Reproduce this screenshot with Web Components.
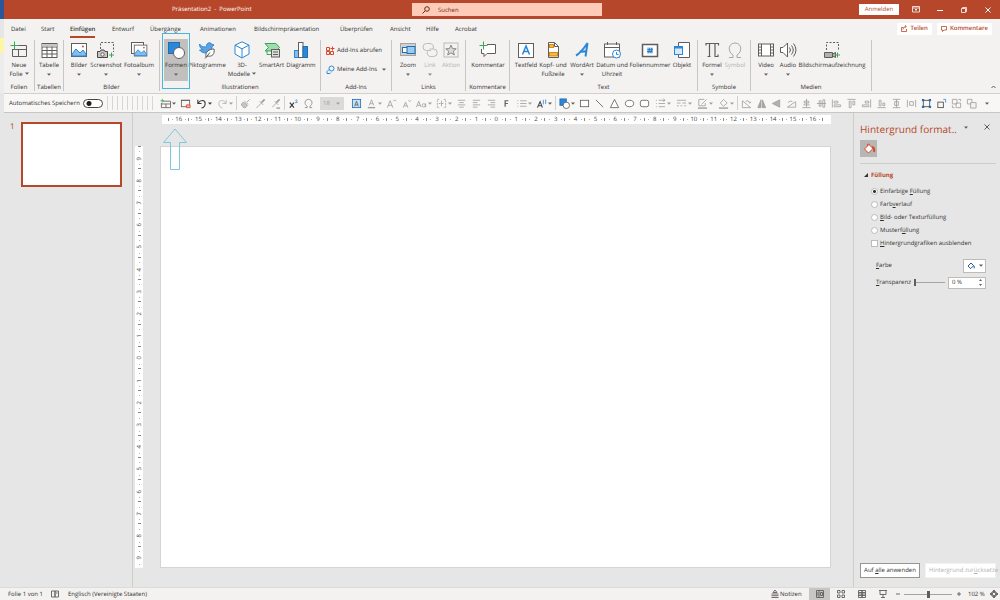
<!DOCTYPE html>
<html lang="de">
<head>
<meta charset="utf-8">
<title>Präsentation2 - PowerPoint</title>
<style>
html,body{height:100%;margin:0}
body{font-family:"Open Sans","Noto Sans",sans-serif;font-size:6px;line-height:9px;color:#323130;background:#e6e6e6;text-rendering:geometricPrecision}
</style>
</head>
<body>
<ppt-app></ppt-app>
<script>
const BASE = `*{box-sizing:border-box}button,input,select{font:inherit;color:inherit;margin:0;padding:0;border:0;background:none;text-rendering:inherit}button{display:flex;align-items:center;justify-content:center;white-space:nowrap}svg{display:block;flex:none;overflow:visible}a{color:inherit;text-decoration:none}`;
const G = '#605e5c', B = '#2b88d8', L = '#a6a4a2', GR = '#3aa757', OR = '#d8492b';
const svg = (body, w = 18, h = 18, vb = '0 0 18 18') => `<svg width="${w}" height="${h}" viewBox="${vb}" fill="none" stroke="${G}" stroke-width="1" aria-hidden="true">${body}</svg>`;
const chev = (c = G) => `<svg width="4" height="3" viewBox="0 0 4 3" aria-hidden="true"><path d="M0 .5h4L2 2.7z" fill="${c}"/></svg>`;
const pic = `<rect x="1.5" y="2.5" width="15" height="13" fill="#fff"/><path d="M2 13l4-5 4 4 3-3 3 4v2H2z" fill="#83bdec" stroke="${B}"/><circle cx="13" cy="5.5" r="1" fill="${OR}" stroke="none"/>`;
const BIG = {
 slide:`<path d="M8 4.500H16.500V15.500H2.500V8M2.500 8.500H16.500M8.500 8.500V15.500" fill="none"/><path d="M4.500 .5V8.500M.5 4.500H8.500" stroke="${GR}"/>`,
 table:`<rect x="2" y="2.500" width="15" height="14" fill="#fff"/><path d="M2 6h15M2 9.500h15M2 13h15M7 2.500v14M12 2.500v14"/><path d="M2 3h15v2.500H2z" fill="#c8c6c4" stroke="none"/>`,
 picture:pic,
 screenshot:`<path d="M3.500 8V1.500H16.500V11" stroke-dasharray="2 1.500"/><path d="M.5 10.500h2.500l1-1.500h3l1 1.500h2.500v6H.5z" fill="#c8c6c4" stroke="#484644"/><circle cx="5.500" cy="13.500" r="1.700" fill="#fff"/><path d="M14.500 11.500v5M12 14h5" stroke="${GR}"/>`,
 album:`<rect x="1.500" y="1.500" width="12" height="11" fill="#fff"/><g transform="translate(3 2) scale(.84)">${pic}</g>`,
 shapes:`<rect x="1.500" y="1.500" width="11" height="11" fill="${B}" stroke="#1f6fb5"/><circle cx="12" cy="12" r="5.500" fill="#fff"/>`,
 bird:`<path d="M1.500 3c2 3 5 3.500 7 2.500C8 2 12 .5 13.500 3l2.500 1-2 1.500c0 4-3 6.500-6 6.500-2.500 0-5-1-6.500-3 1 0 2 0 3-.5-2-1-3-3-3-5.500z" fill="#5aa3e0" stroke="${B}"/><path d="M8 16c-1-5 3-8 8-8 1 5-2 8-6 7zM7 17.500l5-6" fill="#fff"/>`,
 cube:`<path d="M9 .8l7 3.400v8.800l-7 4-7-4V4.200z" fill="#fff" stroke="${B}"/><path d="M2 4.200l7 3.600 7-3.600M9 7.800V17" stroke="${B}"/>`,
 smart:`<path d="M2 2.500h11l3.500 4-3.500 3.500H2l3.500-3.500z" fill="#9fdcae" stroke="${GR}"/><path d="M4 13.500h7M4 13.500v-4" stroke="${GR}"/><rect x="8.500" y="8.500" width="8" height="7.500" fill="#e1dfdd"/><path d="M10 11h5M10 13.500h5"/>`,
 chart:`<rect x="2.500" y="9.500" width="4" height="7" fill="#83bdec" stroke="${B}"/><rect x="6.500" y="1.500" width="4.500" height="15" fill="#fff"/><rect x="11" y="5.500" width="4.500" height="11" fill="${B}" stroke="#1f6fb5"/>`,
 zoom:`<rect x="1.500" y="2.500" width="15" height="12" fill="#d2d0ce" stroke="${L}"/><rect x="3.500" y="6.500" width="6" height="5" fill="#fff" stroke="#1f6fb5"/><rect x="8" y="5.500" width="8" height="7" fill="#9ccbf0" stroke="#1f6fb5"/>`,
 link:`<path d="M10 9.500H5.500a3.500 3.500 0 010-7H9a3.500 3.500 0 013 5.200M8.500 8h4a3.500 3.500 0 010 7.500h-3a3.500 3.500 0 01-3-5" stroke="${L}"/>`,
 action:`<rect x="2" y="2" width="14" height="14" stroke="${L}"/><path d="M9 4l1.500 3.600 3.700.2-2.900 2.400 1 3.800L9 11.900 5.700 14l1-3.800-2.900-2.400 3.700-.2z" fill="#d2d0ce" stroke="${G}"/>`,
 comment:`<path d="M8 3.500h8.500v9H8l-3 3v-3H2.500V8" fill="#fff"/><path d="M4.500 .5v8M.5 4.500h8" stroke="${GR}"/>`,
 textbox:`<rect x="1.500" y="2.500" width="15" height="14" fill="#fff"/><path d="M5.500 13.500L9 5l3.500 8.500M6.800 10.500h4.400" stroke="${B}" stroke-width="1.500"/>`,
 header:`<path d="M4.500 1.500h6l4 4v11h-10z" fill="#fff"/><path d="M10.500 1.500v4h4"/><rect x="5.500" y="3.500" width="4" height="3" fill="#f6b84b" stroke="#d58a10"/><rect x="5.500" y="11.500" width="8" height="3.500" fill="#f6b84b" stroke="#d58a10"/>`,
 wordart:`<path d="M3 14.500C8 12 11 7 14.500 2L12.500 15.500M6.500 10.500c3 .5 5 0 7-.5" stroke="${B}" stroke-width="2"/>`,
 date:`<rect x="1.500" y="3" width="15" height="13" fill="#fff"/><path d="M1.500 6.500h15M4.500 1v3M13.500 1v3"/><circle cx="13.500" cy="13" r="4" fill="#fff" stroke="${B}"/><path d="M13.500 11v2.500h2" stroke="${B}"/>`,
 number:`<rect x="1.500" y="3.500" width="15" height="12" fill="#fff" stroke-width="1.500"/><rect x="6" y="6.500" width="6" height="6" fill="#9ccbf0" stroke="none"/><path d="M8.500 7l-.8 5M10.700 7l-.8 5M6.500 8.700h5.500M6 10.500h5.500" stroke="#1f6fb5" stroke-width=".8"/>`,
 object:`<path d="M5.500 6V1.500h11v15h-11V13" fill="#fff"/><rect x="1.500" y="5.500" width="8" height="8" fill="#d6eafa" stroke="${B}"/><path d="M1.500 6.500h8" stroke="${B}" stroke-width="2"/>`,
 pi:`<path d="M3 4.500V2.500h12.500v2M6.500 2.500v13M12 2.500v13h3v-2M4.500 15.500h3" stroke-width="1.200"/>`,
 omega:`<path d="M3 16.500h4V14C1.500 11 2 2 9 2s7.500 9 2 12v2.500h4" stroke="#8a8886"/>`,
 video:`<rect x="1.500" y="3" width="15" height="12" fill="#fff"/><path d="M4.500 3v12M13.500 3v12M1.500 6h3M1.500 9h3M1.500 12h3M13.500 6h3M13.500 9h3M13.500 12h3"/>`,
 audio:`<path d="M1.500 6.500H4L8.500 2v14L4 11.500H1.500z" fill="#fff"/><path d="M10.500 6.500q2 2.500 0 5M12.500 4.500q3.500 4.500 0 9M14.500 2.500q5 6.500 0 13"/>`,
 record:`<path d="M3.500 9V1.500H15.500V10" stroke-dasharray="2 1.500"/><path d="M1.500 11.500h8v5h-8zM9.500 13l3-1.500v5l-3-1.500" fill="#b3b0ad"/><path d="M14.500 11.500v5M12 14h5" stroke="${GR}"/>`
};
const S = {
 newslide:'<path d="M3.500 3.500h8v7h-10v-5M1.500 6.500h10M6.500 6.500v4"/><path d="M2.500 1v4M.5 3h4" stroke="#3aa757"/>',
 present:'<rect x="1.500" y="2.500" width="9" height="7"/><path d="M1 2.500h10"/><path d="M7 7.500h4v3H7z" fill="#f4b3b3" stroke="#d8492b"/>',
 undo:'<path d="M2 2v4h4M2.500 5.500C5 1.500 10 2 10 6c0 3-2 4.500-4 5" stroke-width="1.200"/>',
 redo:'<path d="M10 2v4H6M9.500 5.500C7 1.500 2 2 2 6c0 3 2 4.500 4 5" stroke="#b3b0ad"/>',
 brush:'<path d="M10.500 1.500L7.500 4.500"/><path d="M4 4.500L8 8c-1 2-2 3-4 2.500C3 9.500 2 8.500 1.500 6.500zM5 3.500l4 3.500" fill="#c8c6c4"/>',
 dropper:'<path d="M10.500 1.500L7 5" stroke-width="2"/><path d="M5 3.500l4 4M7 5.500L2.500 10l-1 1"/>',
 dropper2:'<path d="M10.500 1.500L7 5" stroke-width="2"/><path d="M5 3.500l4 4M7 5.500L2.500 10"/><path d="M7 11h4" stroke-width="1.500"/>',
 sup:'<path d="M2 5l4.500 5.500M6.500 5L2 10.500" stroke="#3b3a39" stroke-width="1.300"/><path d="M8 2.500q1.500-1 2 0T8 5h2.500" stroke="#2b88d8" stroke-width=".8"/>',
 omega:'<path d="M2 10.500h2.500V9C1 7 1.500 1.500 6 1.500S11 7 7.500 9v1.500H10" stroke="#8a8886"/>',
 textbox:'<rect x="1.500" y="1.500" width="9" height="9" fill="#c7e0f4" stroke="#1f6fb5"/><path d="M4 9l2-5.500L8 9M4.700 7.500h2.600"/>',
 fontcolor:'<path d="M3.500 8L6 2l2.500 6M4.500 6.200h3"/><path d="M2 10.500h8" stroke-width="1.500"/>',
 grow:'<path d="M1.500 10.500L4.500 3l3 7.500M2.500 8h4M8 3.500L9.500 2 11 3.500"/>',
 shrink:'<path d="M2.500 10.500L5 4.500l2.500 6M3.500 8.500h3M8 2.500L9.500 4 11 2.500"/>',
 case:'<path d="M.5 10L3 3.500 5.500 10M1.500 8h3"/><circle cx="8.500" cy="8" r="1.800"/><path d="M10.500 6v4"/>',
 spacing:'<path d="M3.500 1.500h-2v9h2M8.500 1.500h2v9h-2M3 6h6" stroke-dasharray="2 1"/><path d="M6 3v6"/>',
 center:'<path d="M2 2.500h8M3.500 5h5M2 7.500h8M3.500 10h5"/>',
 left:'<path d="M2 2.500h8M2 5h5M2 7.500h8M2 10h5"/>',
 right:'<path d="M2 2.500h8M5 5h5M2 7.500h8M5 10h5"/>',
 bold:'<path d="M4.500 9.500V3h3.500M4.500 6h3" stroke="#605e5c" stroke-width="1.300"/>',
 list:'<path d="M4.500 3h7M4.500 6h7M4.500 9h7M1.500 3h1M1.500 6h1M1.500 9h1"/>',
 textfx:'<path d="M1.500 10.500L4.500 4l2.500 6.500M2.500 8.500h3.500" stroke="#484644" stroke-width="1.200"/><path d="M8 2v5M10.500 1.500v5" stroke="#2b88d8"/>',
 shapes:'<rect x="1" y="1" width="7" height="7" fill="#2b88d8" stroke="#1f6fb5"/><circle cx="8" cy="8" r="3.500" fill="#fff"/>',
 rect:'<rect x="1.500" y="2.500" width="9" height="7" fill="#fff"/>', line:'<path d="M2 2l8 8"/>', tri:'<path d="M6 1.500l4.500 9h-9z" fill="#fff"/>',
 oval:'<ellipse cx="6" cy="6" rx="4.500" ry="3.500" fill="#fff"/>', round:'<rect x="1.500" y="2.500" width="9" height="7" rx="2" fill="#fff"/>',
 arrows:'<path d="M4 2.500h7M4 6h7M4 9.500h7M1 2.500h1M1 6h1M1 9.500h1M9 1l2 1.500L9 4"/>',
 dashes:'<path d="M1 2.500h10M1 5.500h4M7 5.500h4M1 8.500h2M5 8.500h2M9 8.500h2"/>',
 outline:'<path d="M9 5.500v3h-7v-7h6M5 7l5.500-5.500"/><path d="M1 11h10" stroke-width="1.500"/>',
 fill:'<path d="M6 1.500L10 5.500 6 9 2.500 5.500z"/><path d="M1 11h10" stroke-width="1.500"/>',
 rot:'<path d="M1.500 3v7.500h9zM5 3.500q3-2 5 2M8.500 5l1.500.5.500-1.500"/>', flip:'<path d="M5.500 2v8.500H2zM7 2v8.500h3.500z" fill="#a6a4a2"/>', flipv:'<path d="M1.500 6L9.500 2v8z" fill="#b3b0ad"/>',
 rot2:'<path d="M1.500 10h9v-6zM2 5q3-3 5-1"/>',
 alc:'<path d="M1.500 10.500h9M6 1v9M3.500 3.500h5v2h-5zM2.500 7.500h7"/>', alm:'<path d="M1 6h10M3.500 3h2v6h-2zM7.500 2h2v8h-2z"/>',
 all:'<path d="M1.500 1.500v9M3.500 3.500h4v2h-4zM3.500 7.500h7v2h-7z"/>', alt:'<path d="M1.500 1.500h9M3.500 3.500h2v7h-2zM7.500 3.500h2v4h-2z"/>',
 alr:'<path d="M10.500 1.500v9M4.500 3.500h4v2h-4zM1.500 7.500h7v2h-7z"/>', alb:'<path d="M1.500 10.500h9M3.500 2.500h2v6h-2zM7.500 5.500h2v3h-2z"/>',
 dv:'<path d="M2 1.500h8M2 10.500h8M4 4h4v4H4zM6 1.500v9"/>', dh:'<path d="M1.500 2v8M10.500 2v8M4 4h4v4H4z"/>',
 crop:'<rect x="2.500" y="2.500" width="7" height="7" stroke="#484644"/><path d="M1 1h2.500v2.500H1zM8.500 1H11v2.500H8.500zM1 8.500h2.500V11H1zM8.500 8.500H11V11H8.500z" fill="#1f6fb5" stroke="none"/>',
 rotobj:'<rect x="2" y="4.500" width="6" height="6" stroke="#484644"/><path d="M8 1.500h2.500V5" stroke="#2b88d8"/>',
 front:'<path d="M1.500 1.500h5v5h-5zM5.500 5.500h5v5h-5zM8 1.500h2.500v2M1.500 8v2.500H4"/>', back:'<path d="M1.500 1.500h5v5h-5z" /><path d="M5 5h6v6H5z" fill="#f3f2f1"/>'
};
const small = (n, c) => `<svg width="11" height="11" viewBox="0 0 12 12" fill="none" stroke="${c}" stroke-width=".9" aria-hidden="true">${S[n]}</svg>`;

function define(name, css, html) {
  const t = document.createElement('template');
  customElements.define(name, class extends HTMLElement {
    connectedCallback() {
      if (this.shadowRoot) return;
      t.innerHTML = `<style>${BASE}${css}</style>${typeof html === 'function' ? html(this) : html}`;
      this.attachShadow({ mode: 'open' }).append(t.content.cloneNode(true));
    }
  });
}

define('title-bar', `:host{display:grid;grid-template-columns:1fr minmax(100px,190px) 1fr;height:19px;background:linear-gradient(90deg,#2b579a 4px,#b7472a 4px);color:#fff;align-items:center;padding-left:14px}
.t{padding-left:158px;white-space:nowrap}.s{display:flex;align-items:center;height:13px;background:#fdcbb8;color:#6b2a1a;padding-left:10px}
.s input{flex:1;min-width:0;margin-left:8px;outline:0;height:11px}.s input::placeholder{color:#6b2a1a;opacity:1}
.r{display:flex;justify-content:flex-end;align-items:center}.login{background:#fff;color:#b7472a;width:40px;height:11px;margin-right:5px}.w{width:24px;height:16px}`,
`<span class="t">Präsentation2 &nbsp;-&nbsp; PowerPoint</span>
<label class="s"><svg width="8" height="8" viewBox="0 0 8 8" fill="none" stroke="#6b2a1a"><circle cx="5" cy="3" r="2.300"/><path d="M3.300 4.700L.5 7.500"/></svg><input type="text" aria-label="Suchen" placeholder="Suchen"></label>
<div class="r"><button class="login">Anmelden</button>
<button class="w" aria-label="Menüband-Anzeigeoptionen"><svg width="8" height="7" viewBox="0 0 8 7" fill="none" stroke="#fff" stroke-width=".8"><path d="M.5 .5h7v5.500h-7zM.5 2h7M4 5V3M3 4l1-1 1 1"/></svg></button>
<button class="w" aria-label="Minimieren"><svg width="6" height="6" viewBox="0 0 6 6" stroke="#fff"><path d="M0 3.500h6"/></svg></button>
<button class="w" aria-label="Verkleinern"><svg width="6" height="6" viewBox="0 0 6 6" fill="none" stroke="#fff" stroke-width=".8"><path d="M.5 1.500h4v4h-4zM1.500 1.500v-1h4v4h-1"/></svg></button>
<button class="w" aria-label="Schließen"><svg width="6" height="6" viewBox="0 0 6 6" stroke="#fff"><path d="M.5 .5l5 5M5.500 .5l-5 5"/></svg></button></div>`);

define('ribbon-tabs', `:host{display:flex;height:19px;padding-left:11px;padding-right:8px;background:linear-gradient(90deg,#e6e6e6 4px,#f3f2f1 4px);justify-content:space-between;align-items:center}
nav{display:grid;grid-template-columns:30px 29px 42px 38px 50px 54px 86px 50px 36px 29px 30px}
nav a{white-space:nowrap;line-height:13px;justify-self:start;border-bottom:2px solid transparent;margin-top:3px}nav a.on{font-weight:600;border-color:#b7472a}
.r{display:flex;gap:5px}.r button{height:12px;background:#fff;color:#b7472a;gap:3px;padding:0 4px;font-weight:600;border-radius:1px}`,
`<nav>${['Datei','Start','Einfügen','Entwurf','Übergänge','Animationen','Bildschirmpräsentation','Überprüfen','Ansicht','Hilfe','Acrobat'].map(t=>`<a href="#"${t==='Einfügen'?' class="on"':''}>${t}</a>`).join('')}</nav>
<div class="r"><button><svg width="6" height="7" viewBox="0 0 6 7" fill="none" stroke="#b7472a" stroke-width=".8"><path d="M2 2.500H.5v4h5V4M2 4.500Q2 1.500 5 1.500M4 .3l1.300 1.200L4 2.800"/></svg>Teilen</button>
<button><svg width="6" height="6" viewBox="0 0 6 6" fill="none" stroke="#b7472a" stroke-width=".8"><path d="M.5 .5h5v3.500H3L1.500 5.500V4h-1z"/></svg>Kommentare</button></div>`);

define('ribbon-group', `:host{display:flex;flex-direction:column;flex:none;border-right:1px solid #c8c6c4;width:var(--w);height:51px;margin-top:2px}
.i{display:flex;flex:1;padding-left:var(--p,0)}.l{line-height:8px;text-align:center;white-space:nowrap}`,
 h => `<div class="i"><slot></slot></div><div class="l">${h.getAttribute('label')}</div>`);

define('ribbon-item', `:host{display:block;flex:none;width:var(--w);height:42px;margin-top:-1px}
button{flex-direction:column;justify-content:flex-start;width:100%;height:100%;padding-top:2px}
:host([active]) button{background:#c2c0be}:host([disabled]) button{color:#b3b0ad}:host([disabled]) svg{opacity:.7}
:host([active]){position:relative}:host([active])::after{content:"";position:absolute;inset:-6px -2px -8px -2px;border:1px solid #45b8d8}
.t{display:block;line-height:9px;text-align:center;margin-top:2px}.t svg{display:inline-block;margin-left:2px;vertical-align:1px}.c{margin-top:3px}`,
 h => { const l = h.getAttribute('label').split('|'), two = l.length > 1, m = h.hasAttribute('menu');
  return `<button${h.hasAttribute('disabled')?' disabled':''}>${svg(BIG[h.getAttribute('icon')])}<span class="t">${l.join('<br>')}${two&&m?chev():''}</span>${!two&&m?`<span class="c">${chev()}</span>`:''}</button>`; });

const item = (w, icon, label, extra = '') => `<ribbon-item style="--w:${w}px" icon="${icon}" label="${label}" ${extra}></ribbon-item>`;
define('ribbon-panel', `:host{display:flex;height:55px;padding-left:4px;background:linear-gradient(#fdf6a6,#fdf6a6) 0 0/4px 15px no-repeat,linear-gradient(90deg,#ececec 4px,#f3f2f1 4px)}
.a{display:flex;flex-direction:column;gap:10px;padding-top:6px}.a button{gap:2px;justify-content:flex-start}.up{margin-left:auto;align-self:flex-end;width:14px;height:12px}`,
`<ribbon-group label="Folien" style="--w:31px">${item(30,'slide','Neue|Folie','menu')}</ribbon-group>
<ribbon-group label="Tabellen" style="--w:29px">${item(28,'table','Tabelle','menu')}</ribbon-group>
<ribbon-group label="Bilder" style="--w:96px;--p:1px">${item(28,'picture','Bilder','menu')}${item(26,'screenshot','Screenshot','menu')}${item(40,'album','Fotoalbum','menu')}</ribbon-group>
<ribbon-group label="Illustrationen" style="--w:161px;--p:4px">${item(24,'shapes','Formen','menu active')}${item(38,'bird','Piktogramme')}${item(32,'cube','3D-|Modelle','menu')}${item(27,'smart','SmartArt')}${item(32,'chart','Diagramm')}</ribbon-group>
<ribbon-group label="Add-Ins" style="--w:71px;--p:5px"><div class="a">
<button><svg width="9" height="9" viewBox="0 0 9 9" fill="none" stroke="${OR}"><path d="M.5 1.500h3v3h-3zM.5 5.500h3v3h-3zM4.500 5.500h3v3h-3zM6.500 .5v4M4.500 2.500h4"/></svg>Add-Ins abrufen</button>
<button><svg width="9" height="9" viewBox="0 0 9 9" fill="none" stroke="${B}"><path d="M3 4.500L1 6.500v2h3l1-1"/><circle cx="5.500" cy="3.500" r="2.500"/></svg>Meine Add-Ins &nbsp;${chev()}</button></div></ribbon-group>
<ribbon-group label="Links" style="--w:74px;--p:4px">${item(24,'zoom','Zoom','menu')}${item(20,'link','Link','menu disabled')}${item(22,'action','Aktion','disabled')}</ribbon-group>
<ribbon-group label="Kommentare" style="--w:44px;--p:1px">${item(42,'comment','Kommentar')}</ribbon-group>
<ribbon-group label="Text" style="--w:188px;--p:4px">${item(24,'textbox','Textfeld')}${item(30,'header','Kopf- und|Fußzeile')}${item(28,'wordart','WordArt','menu')}${item(32,'date','Datum und|Uhrzeit')}${item(44,'number','Foliennummer')}${item(20,'object','Objekt')}</ribbon-group>
<ribbon-group label="Symbole" style="--w:53px;--p:3px">${item(22,'pi','Formel','menu')}${item(24,'omega','Symbol','disabled')}</ribbon-group>
<ribbon-group label="Medien" style="--w:121px;--p:4px">${item(22,'video','Video','menu')}${item(22,'audio','Audio','menu')}${item(66,'record','Bildschirmaufzeichnung')}</ribbon-group>
<button class="up" aria-label="Menüband reduzieren"><svg width="5" height="4" viewBox="0 0 5 4" fill="none" stroke="${G}"><path d="M.5 3l2-2 2 2"/></svg></button>`);

const D = '#605e5c', P = '#a19f9d';
const tools = [['newslide',D,1],['present',D],['undo','#3b3a39',1],['redo',P,1],'|',['brush',P],['dropper',P],['dropper2',P],'|',['sup',D],['omega',P],'size',['textbox',D],['fontcolor',P,2],['grow',P],['shrink',P],['case',P,2],['spacing',P,2],['center',P],['left',P],['right',P],['bold',D],['list',P,2],['textfx',D,2],'|',['shapes',D,2],['rect',D],['line',D],['tri',D],['oval',D],['round',D],['arrows',P,1],['dashes',P,1],['outline',P,1],['fill',P,1],'|',['rot',P],['flip',P],['flipv',P],['rot2',P],['alc',P],['alm',P],['all',P],['alt',P],['alr',P],['alb',P],['dv',P],['dh',P],['crop',D],['rotobj',D],['front',P],['back',P]];
define('quick-bar', `:host{display:flex;align-items:center;height:20px;margin-left:4px;padding-left:5px;background:#f8f7f6;border-top:1px solid #d2d0ce;border-bottom:1px solid #c8c6c4;white-space:nowrap}
.auto{display:flex;align-items:center;width:98px;justify-content:space-between;flex:none;padding-right:4px}
input[type=checkbox]{appearance:none;flex:none;width:20px;height:9px;border:1px solid #484644;border-radius:5px;background:radial-gradient(circle at 5px 50%,#201f1e 2px,transparent 3px) #fff}
.g{flex:none;width:46px;height:14px;margin-right:4px;background:repeating-linear-gradient(90deg,#d8d6d4 0 1px,transparent 1px 5px)}
button{width:15px;height:15px;flex:none}button.m1,button.m2{width:21px;gap:1px}button.m2{width:20px}i{height:14px;border-left:1px solid #d2d0ce;margin:0 1px}
.z{display:flex;align-items:center;width:24px;margin:0 5px 0 4px}select{width:24px;height:13px;background:#dcdad8;color:#a19f9d;appearance:none;padding-left:3px}.z svg{margin-left:-8px}`,
`<label class="auto">Automatisches Speichern<input type="checkbox" role="switch"></label><span class="g"></span>
${tools.map(t => t==='|'?'<i></i>':t==='size'?`<span class="z"><select aria-label="Schriftgrad"><option>18</option></select>${chev(P)}</span>`:`<button class="m${t[2]||0}" aria-label="${t[0]}">${small(t[0],t[1])}${t[2]?chev(t[1]):''}</button>`).join('')}
<button aria-label="Weitere">${chev()}</button>`);

define('slide-rail', `:host{display:flex;gap:6px;padding:9px 0 0 10px;border-right:1px solid #cfcdcb;align-items:flex-start}
.n{color:#b7472a;font-size:8px}.th{width:101px;height:65px;background:#fff;border:2px solid #b7472a}`,
`<span class="n">1</span><button class="th" aria-label="Folie 1"></button>`);

const seq = n => Array.from({length:2*n+1},(_, i) => Math.abs(n-i));
define('ruler-bar', `:host{display:flex;background:#fff;padding:0 8px 0 6px;height:9px;line-height:9px;color:#484644}
:host([vertical]){flex-direction:column;padding:0;height:auto;width:8px;border-radius:1px}
div{flex:1;display:flex;align-items:center;justify-content:space-between;min-width:0;min-height:0;padding-right:2px}
i{width:1px;height:3px;background:#8a8886}b{width:1px;height:1px;background:#b3b0ad}span{display:block}
:host([vertical]) div{flex-direction:column;padding:0 0 3px}:host([vertical]) i{width:3px;height:1px}:host([vertical]) span{writing-mode:vertical-rl;transform:rotate(180deg);line-height:8px}`,
 h => seq(+h.getAttribute('max')).map(n => `<div><i></i><b></b><span>${n}</span><b></b></div>`).join('') + (h.hasAttribute('vertical')?'':'<i style="align-self:center"></i>'));

define('slide-canvas', `:host{display:grid;grid-template-columns:8px 1fr;grid-template-rows:9px 1fr;column-gap:17px;row-gap:22px;padding:2px 22px 19px 2px;position:relative;min-width:0}
.h{grid-column:2;margin-left:2px}.v{grid-row:2}.s{background:#fff;border:1px solid #d6d4d2}
.arrow{position:absolute;left:30px;top:15px}`,
`<ruler-bar class="h" max="16"></ruler-bar><ruler-bar class="v" max="9" vertical></ruler-bar><section class="s" aria-label="Folie"></section>
<svg class="arrow" width="24" height="42" viewBox="0 0 24 42" fill="none" stroke="#7cc8dc"><path d="M12 1L23.500 14.500H16.500V41.500H7.500V14.500H.5z"/></svg>`);

define('format-pane', `:host{display:flex;flex-direction:column;border-left:1px solid #cfcdcb;padding:7px 4px 9px 6px;min-width:0;overflow:hidden}
header{display:flex;align-items:center;height:18px}h2{margin:0;font-size:10px;line-height:18px;font-weight:400;color:#b7472a;white-space:nowrap;width:103px}header button{width:6px;height:10px;margin-top:-4px}header .x{margin-left:15px}
.tab{width:17px;height:17px;background:#b8b6b4}.tabs{margin-top:2px;height:24px;border-bottom:1px solid #cfcdcb}
h3{margin:5px 0 0 4px;font-size:6px;line-height:12px;color:#b7472a;display:flex;align-items:center;gap:3px}
fieldset{border:0;margin:4px 0 0 11px;padding:0;display:flex;flex-direction:column}
label{display:flex;align-items:center;white-space:nowrap}fieldset label{height:13px;gap:2px}
input[type=radio],input[type=checkbox]{appearance:none;flex:none;width:7px;height:7px;background:#fff;border:1px solid #bebbb8}input[type=radio]{border-radius:50%}input[type=radio]:checked{background:radial-gradient(circle,#323130 1px,#fff 2px)}
.row{display:flex;align-items:center;height:15px;margin-left:16px;margin-right:10px;margin-top:2px}.gap{margin-top:8px}.row .k{flex:1}.col{width:23px;height:14px;background:#fff;border:1px solid #bebbb8;gap:4px}
.rg{appearance:none;width:31px;height:9px;margin-right:3px;background:linear-gradient(#a6a4a2,#a6a4a2) 0 50%/100% 1px no-repeat}.rg::-webkit-slider-thumb{appearance:none;width:2px;height:7px;background:#605e5c}
.sp{display:flex;align-items:center;width:38px;height:12px;background:#fff;border:1px solid #bebbb8;padding:0 3px}.sp input{width:100%;min-width:0;outline:0}
footer{margin-top:auto;display:flex;gap:5px}footer button{height:15px;width:60px;flex:none;background:#fff;border:1px solid #979593}footer button+button{width:auto;flex:1;min-width:0;justify-content:flex-start;padding-left:3px;border-color:#f3f2f1;color:#b3b0ad}`,
`<header><h2>Hintergrund format..</h2><button aria-label="Optionen">${chev()}</button><button class="x" aria-label="Schließen"><svg width="6" height="6" viewBox="0 0 6 6" stroke="${G}"><path d="M.5 .5l5 5M5.500 .5l-5 5"/></svg></button></header>
<div class="tabs"><button class="tab" aria-label="Füllung"><svg width="12" height="12" viewBox="0 0 12 12" fill="#fff" stroke="${OR}"><path d="M6 1.500L10 5.500 5.500 10 1.500 6z"/><path d="M4.500 3V1.500q1-1 2 0" fill="none"/><path d="M9 4q3 1 2 5" fill="none" stroke-width="2"/></svg></button></div>
<h3><svg width="4" height="4" viewBox="0 0 4 4"><path d="M4 0v4H0z" fill="#323130"/></svg>Füllung</h3>
<fieldset aria-label="Füllung"><label><input type="radio" name="f" checked><span>Einfarbige <u>F</u>üllung</span></label><label><input type="radio" name="f"><span>Farb<u>v</u>erlauf</span></label><label><input type="radio" name="f"><span><u>B</u>ild- oder Texturfüllung</span></label><label><input type="radio" name="f"><span>Musterf<u>ü</u>llung</span></label><label><input type="checkbox"><span><u>H</u>intergrundgrafiken ausblenden</span></label></fieldset>
<div class="row gap"><span class="k"><u>F</u>arbe</span><button class="col" aria-label="Farbe"><svg width="8" height="8" viewBox="0 0 12 12" fill="#fff" stroke="#2b579a" stroke-width="1.500"><path d="M6 1.500L10 5.500 5.500 10 1.500 6zM10 5.500q1.500 2 .8 4"/></svg>${chev()}</button></div>
<div class="row"><label class="k" for="t"><span><u>T</u>ransparenz</span></label><input class="rg" type="range" value="0" aria-label="Transparenz"><span class="sp"><input id="t" value="0 %"><svg width="3" height="7" viewBox="0 0 3 7" fill="${G}"><path d="M0 2L1.500 0 3 2zM0 5l1.500 2L3 5z"/></svg></span></div>
<footer><button><span>Auf <u>a</u>lle anwenden</span></button><button disabled><span>Hintergrund zur<u>ü</u>cksetze</span></button></footer>`);

const vi = b => `<svg width="8" height="8" viewBox="0 0 8 8" fill="none" stroke="#605e5c" stroke-width=".9" aria-hidden="true">${b}</svg>`;
define('status-bar', `:host{display:flex;align-items:center;height:13px;padding-left:8px;background:#f3f2f1;border-top:1px solid #dddbd9;white-space:nowrap}
.p{width:43px}.b{width:17px;display:flex}.r{margin-left:auto;display:flex;align-items:center}.nt{gap:1px;width:38px;justify-content:flex-start}.v{width:21px;height:12px}.on{background:#c8c6c4}
.q{width:9px}.pct{margin:0 4px 0 5px;width:16px}input{appearance:none;width:48px;height:8px;margin:0 2px;background:linear-gradient(#a6a4a2,#a6a4a2) 0 50%/100% 1px no-repeat}input::-webkit-slider-thumb{appearance:none;width:3px;height:7px;background:#605e5c}.fit{width:12px}`,
`<span class="p">Folie 1 von 1</span><span class="b">${vi('<path d="M.5 1h3.500v6H.5zM4 1h3.500v6H4zM5 3h1.500"/>')}</span><span>Englisch (Vereinigte Staaten)</span>
<div class="r"><button class="nt">${vi('<path d="M4 0L2 2.500h4zM.5 4h7M.5 5.700h7M.5 7.500h7"/>')}Notizen</button>
<button class="v on" aria-label="Normal">${vi('<path d="M.5 .5h7v7h-7zM3 .5v7M4.500 2.500h2v3h-2zM1 3h1.500M1 5h1.500"/>')}</button>
<button class="v" aria-label="Foliensortierung">${vi('<path d="M.5 .5h2.500v2.500H.5zM5 .5h2.500v2.500H5zM.5 5h2.500v2.500H.5zM5 5h2.500v2.500H5z"/>')}</button>
<button class="v" aria-label="Leseansicht">${vi('<path d="M.5 .5H4v7H.5zM4 .5h3.500v7H4zM1 2.500h6M1 4h6M1 5.500h6"/>')}</button>
<button class="v" aria-label="Bildschirmpräsentation">${vi('<path d="M0 .5h8M1 .5v4h6v-4M4 4.500v3M2 7.500h4"/>')}</button>
<button class="q" aria-label="Verkleinern">${vi('<path d="M2 4h4"/>')}</button><input type="range" value="50" aria-label="Zoom"><button class="q" aria-label="Vergrößern">${vi('<path d="M2 4h4M4 2v4"/>')}</button><span class="pct">102 %</span><button class="fit" aria-label="Anpassen">${vi('<path d="M4 0l1.500 1.500h-3zM4 8l1.500-1.500h-3zM0 4l1.500-1.500v3zM8 4L6.500 2.500v3zM2.500 2.500h3v3h-3z"/>')}</button></div>`);

define('ppt-app', `:host{display:flex;flex-direction:column;min-height:100vh;overflow:hidden}main{flex:1;display:grid;grid-template-columns:133px 1fr 147px}`,
`<title-bar></title-bar><ribbon-tabs></ribbon-tabs><ribbon-panel></ribbon-panel><quick-bar></quick-bar><main><slide-rail></slide-rail><slide-canvas></slide-canvas><format-pane></format-pane></main><status-bar></status-bar>`);
</script>
</body>
</html>
